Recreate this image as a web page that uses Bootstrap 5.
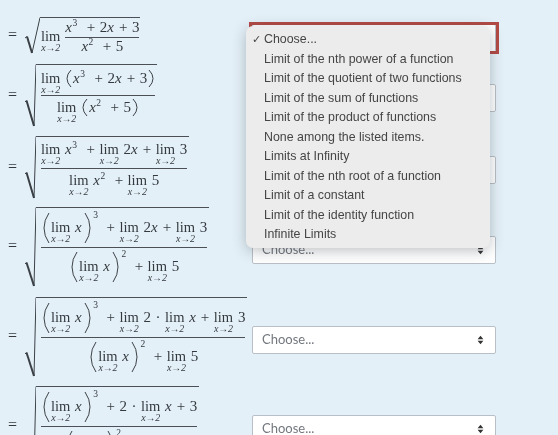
<!DOCTYPE html>
<html lang="en"><head><meta charset="utf-8">
<title>Limit laws</title>
<link href="https://cdn.jsdelivr.net/npm/bootstrap@5.3.0/dist/css/bootstrap.min.css" rel="stylesheet">
<style>
html,body{height:100%;overflow:hidden;background:#e4f0f7}
.pg{padding-top:17px;padding-left:8px;filter:blur(.35px);font-family:"Liberation Serif",serif;font-size:15px;color:#33393f;height:435px;overflow:hidden}
.mrow{display:flex;align-items:stretch}
.r1{height:37px;margin-bottom:10px}.r2{height:63px;margin-bottom:9px}.r3{height:63px;margin-bottom:8px}
.r4{height:80px;margin-bottom:10px}.r5{height:80px;margin-bottom:9px}.r6{height:80px}
.mcol{width:244px;flex:none;display:flex;align-items:stretch}
.eqs{width:17px;flex:none;align-self:center;font-size:16px;line-height:1;margin-top:-2px}
.rsign{flex:none;display:block;height:100%}
.rbody{border-top:1.3px solid #4a5056;align-self:flex-start;height:100%;display:flex;padding:0 2px 0 5px}
.r1 .rbody{padding:0 1px 0 1px;align-items:flex-start}
.fr{display:flex;flex-direction:column;align-items:center}
.fr-n{border-bottom:1.3px solid #4a5056;width:100%;text-align:center;white-space:nowrap}
.big-n{height:40px;padding-top:4px}
.big-d{padding-top:3px}
.fr-d{text-align:center;white-space:nowrap}
.lmo{display:inline-flex;flex-direction:column;align-items:center;margin-right:1px}
.lmo span{font-size:14.5px;line-height:14px}
.lmo i{font-size:10px;line-height:9px;letter-spacing:-.2px}
.op{margin:0 4.5px}
em{padding-right:.5px}
.sp{font-size:9.5px;position:relative;top:-6px;line-height:0;margin-right:5px}
.sp-last{margin-right:1px}
.mpn{display:inline-block;vertical-align:-5px;width:6px;height:19px;margin:0 1px}
.bpn{display:inline-block;vertical-align:-12px;width:7px;height:32px;margin:0 1.5px}
.sp-big{font-size:9.5px;position:relative;top:-14px;line-height:0;margin:0 4px 0 1px}
.sel-w{flex:none;width:244px;align-self:center;margin-top:5px;position:relative}
.form-select.chz{height:28px;min-height:0;border-radius:2px;border:1px solid #b8bfc6;padding:0 0 0 9px;font-family:"Lato","Open Sans",sans-serif;font-size:13px;color:#73787e;background-color:#fff;background-size:7px 10px;background-position:right 11px center;box-shadow:none;background-image:url("data:image/svg+xml,%3Csvg xmlns='http://www.w3.org/2000/svg' viewBox='0 0 8 12'%3E%3Cpath fill='%23333' d='M4 1 7.5 5H.5zM4 11 .5 7h7z'/%3E%3C/svg%3E")}
.alert-ring{position:absolute;left:-3px;right:-3px;top:-2px;bottom:-2px;border:3px solid #b34a45}
.pick-menu{left:-6px;top:2px;width:244px;background:#ececec;border:0;border-radius:7px;padding:4px 0 3px;margin:0;box-shadow:0 3px 14px rgba(40,50,60,.3);font-family:"Liberation Sans",sans-serif;font-size:12.4px;color:#454545;z-index:5}
.pick-menu .dropdown-item{padding:0 0 0 18px;line-height:19.55px;height:19.55px;color:#454545;position:relative;background:none}
.tick{position:absolute;left:6px;top:0;font-family:"DejaVu Sans",sans-serif;font-size:11px;font-weight:700}
</style></head>
<body>
<div class="pg">

<div class="mrow r1"><div class="mcol"><span class="eqs">=</span>
<svg class="rsign" width="15" viewBox="0 0 15 37" preserveAspectRatio="none"><path d="M0 21 2 19.5" fill="none" stroke="#3a4046" stroke-width="1"/><path d="M2 19.5 7 36" fill="none" stroke="#3a4046" stroke-width="2"/><path d="M7 36 15 .6" fill="none" stroke="#3a4046" stroke-width="1"/></svg>
<div class="rbody"><span class="lmo" style="margin-top:11px"><span>lim</span><i>x→2</i></span>
<div class="fr ms-1" style="margin-top:0"><div class="fr-n" style="line-height:19px"><em>x</em><span class="sp">3</span><span class="op">+</span>2<em>x</em><span class="op">+</span>3</div><div class="fr-d" style="line-height:17px"><em>x</em><span class="sp">2</span><span class="op">+</span>5</div></div></div></div>
<div class="sel-w"><select class="form-select chz" aria-label="Answer 1"><option>Choose...</option></select><span class="alert-ring"></span>
<ul class="dropdown-menu show pick-menu">
<li class="dropdown-item"><span class="tick">✓</span>Choose...</li>
<li class="dropdown-item">Limit of the nth power of a function</li>
<li class="dropdown-item">Limit of the quotient of two functions</li>
<li class="dropdown-item">Limit of the sum of functions</li>
<li class="dropdown-item">Limit of the product of functions</li>
<li class="dropdown-item">None among the listed items.</li>
<li class="dropdown-item">Limits at Infinity</li>
<li class="dropdown-item">Limit of the nth root of a function</li>
<li class="dropdown-item">Limit of a constant</li>
<li class="dropdown-item">Limit of the identity function</li>
<li class="dropdown-item">Infinite Limits</li>
</ul></div></div>

<div class="mrow r2"><div class="mcol"><span class="eqs">=</span>
<svg class="rsign" width="11" viewBox="0 0 11 63" preserveAspectRatio="none"><path d="M0 38 1.5 36.500" fill="none" stroke="#3a4046"/><path d="M1.5 36.500 9 62" fill="none" stroke="#3a4046" stroke-width="2"/><path d="M9 62 11 .6" fill="none" stroke="#3a4046"/></svg>
<div class="rbody"><div class="fr"><div class="fr-n" style="padding-top:2px;height:31px"><span class="lmo"><span>lim</span><i>x→2</i></span> <svg class="mpn" viewBox="0 0 6 19"><path d="M5 1Q1 5 1 9.500T5 18" fill="none" stroke="#3a4046"/></svg><em>x</em><span class="sp">3</span><span class="op">+</span>2<em>x</em><span class="op">+</span>3<svg class="mpn" viewBox="0 0 6 19"><path d="M1 1Q5 5 5 9.500T1 18" fill="none" stroke="#3a4046"/></svg></div><div class="fr-d"><span class="lmo"><span>lim</span><i>x→2</i></span> <svg class="mpn" viewBox="0 0 6 19"><path d="M5 1Q1 5 1 9.500T5 18" fill="none" stroke="#3a4046"/></svg><em>x</em><span class="sp">2</span><span class="op">+</span>5<svg class="mpn" viewBox="0 0 6 19"><path d="M1 1Q5 5 5 9.500T1 18" fill="none" stroke="#3a4046"/></svg></div></div></div></div>
<div class="sel-w"><select class="form-select chz" aria-label="Answer 2"><option>Choose...</option></select></div></div>

<div class="mrow r3"><div class="mcol"><span class="eqs">=</span>
<svg class="rsign" width="11" viewBox="0 0 11 63" preserveAspectRatio="none"><path d="M0 38 1.5 36.500" fill="none" stroke="#3a4046"/><path d="M1.5 36.500 9 62" fill="none" stroke="#3a4046" stroke-width="2"/><path d="M9 62 11 .6" fill="none" stroke="#3a4046"/></svg>
<div class="rbody"><div class="fr"><div class="fr-n" style="padding-top:1px;height:32px"><span class="lmo"><span>lim</span><i>x→2</i></span> <em>x</em><span class="sp">3</span><span class="op">+</span><span class="lmo"><span>lim</span><i>x→2</i></span> 2<em>x</em><span class="op">+</span><span class="lmo"><span>lim</span><i>x→2</i></span> 3</div><div class="fr-d"><span class="lmo"><span>lim</span><i>x→2</i></span> <em>x</em><span class="sp">2</span><span class="op">+</span><span class="lmo"><span>lim</span><i>x→2</i></span> 5</div></div></div></div>
<div class="sel-w"><select class="form-select chz" aria-label="Answer 3"><option>Choose...</option></select></div></div>

<div class="mrow r4"><div class="mcol"><span class="eqs">=</span>
<svg class="rsign" width="11" viewBox="0 0 11 80" preserveAspectRatio="none"><path d="M0 57 1.5 55.500" fill="none" stroke="#3a4046"/><path d="M1.5 55.500 9 79" fill="none" stroke="#3a4046" stroke-width="2"/><path d="M9 79 11 .6" fill="none" stroke="#3a4046"/></svg>
<div class="rbody"><div class="fr"><div class="fr-n big-n"><svg class="bpn" viewBox="0 0 7 32"><path d="M6 1Q1 8 1 16T6 31" fill="none" stroke="#3a4046"/></svg><span class="lmo"><span>lim</span><i>x→2</i></span> <em>x</em><svg class="bpn" viewBox="0 0 7 32"><path d="M1 1Q6 8 6 16T1 31" fill="none" stroke="#3a4046"/></svg><span class="sp-big">3</span><span class="op">+</span><span class="lmo"><span>lim</span><i>x→2</i></span> 2<em>x</em><span class="op">+</span><span class="lmo"><span>lim</span><i>x→2</i></span> 3</div><div class="fr-d big-d"><svg class="bpn" viewBox="0 0 7 32"><path d="M6 1Q1 8 1 16T6 31" fill="none" stroke="#3a4046"/></svg><span class="lmo"><span>lim</span><i>x→2</i></span> <em>x</em><svg class="bpn" viewBox="0 0 7 32"><path d="M1 1Q6 8 6 16T1 31" fill="none" stroke="#3a4046"/></svg><span class="sp-big">2</span><span class="op">+</span><span class="lmo"><span>lim</span><i>x→2</i></span> 5</div></div></div></div>
<div class="sel-w"><select class="form-select chz" aria-label="Answer 4"><option>Choose...</option></select></div></div>

<div class="mrow r5"><div class="mcol"><span class="eqs">=</span>
<svg class="rsign" width="11" viewBox="0 0 11 80" preserveAspectRatio="none"><path d="M0 57 1.5 55.500" fill="none" stroke="#3a4046"/><path d="M1.5 55.500 9 79" fill="none" stroke="#3a4046" stroke-width="2"/><path d="M9 79 11 .6" fill="none" stroke="#3a4046"/></svg>
<div class="rbody"><div class="fr"><div class="fr-n big-n"><svg class="bpn" viewBox="0 0 7 32"><path d="M6 1Q1 8 1 16T6 31" fill="none" stroke="#3a4046"/></svg><span class="lmo"><span>lim</span><i>x→2</i></span> <em>x</em><svg class="bpn" viewBox="0 0 7 32"><path d="M1 1Q6 8 6 16T1 31" fill="none" stroke="#3a4046"/></svg><span class="sp-big">3</span><span class="op">+</span><span class="lmo"><span>lim</span><i>x→2</i></span> 2<span class="op">·</span><span class="lmo"><span>lim</span><i>x→2</i></span> <em>x</em><span class="op">+</span><span class="lmo"><span>lim</span><i>x→2</i></span> 3</div><div class="fr-d big-d"><svg class="bpn" viewBox="0 0 7 32"><path d="M6 1Q1 8 1 16T6 31" fill="none" stroke="#3a4046"/></svg><span class="lmo"><span>lim</span><i>x→2</i></span> <em>x</em><svg class="bpn" viewBox="0 0 7 32"><path d="M1 1Q6 8 6 16T1 31" fill="none" stroke="#3a4046"/></svg><span class="sp-big">2</span><span class="op">+</span><span class="lmo"><span>lim</span><i>x→2</i></span> 5</div></div></div></div>
<div class="sel-w"><select class="form-select chz" aria-label="Answer 5"><option>Choose...</option></select></div></div>

<div class="mrow r6"><div class="mcol"><span class="eqs">=</span>
<svg class="rsign" width="11" viewBox="0 0 11 80" preserveAspectRatio="none"><path d="M0 57 1.5 55.500" fill="none" stroke="#3a4046"/><path d="M1.5 55.500 9 79" fill="none" stroke="#3a4046" stroke-width="2"/><path d="M9 79 11 .6" fill="none" stroke="#3a4046"/></svg>
<div class="rbody"><div class="fr"><div class="fr-n big-n"><svg class="bpn" viewBox="0 0 7 32"><path d="M6 1Q1 8 1 16T6 31" fill="none" stroke="#3a4046"/></svg><span class="lmo"><span>lim</span><i>x→2</i></span> <em>x</em><svg class="bpn" viewBox="0 0 7 32"><path d="M1 1Q6 8 6 16T1 31" fill="none" stroke="#3a4046"/></svg><span class="sp-big">3</span><span class="op">+</span>2<span class="op">·</span><span class="lmo"><span>lim</span><i>x→2</i></span> <em>x</em><span class="op">+</span>3</div><div class="fr-d big-d"><svg class="bpn" viewBox="0 0 7 32"><path d="M6 1Q1 8 1 16T6 31" fill="none" stroke="#3a4046"/></svg><span class="lmo"><span>lim</span><i>x→2</i></span> <em>x</em><svg class="bpn" viewBox="0 0 7 32"><path d="M1 1Q6 8 6 16T1 31" fill="none" stroke="#3a4046"/></svg><span class="sp-big">2</span><span class="op">+</span><span class="lmo"><span>lim</span><i>x→2</i></span> 5</div></div></div></div>
<div class="sel-w"><select class="form-select chz" aria-label="Answer 6"><option>Choose...</option></select></div></div>

</div>
<script src="https://cdn.jsdelivr.net/npm/bootstrap@5.3.0/dist/js/bootstrap.bundle.min.js"></script>
</body></html>
